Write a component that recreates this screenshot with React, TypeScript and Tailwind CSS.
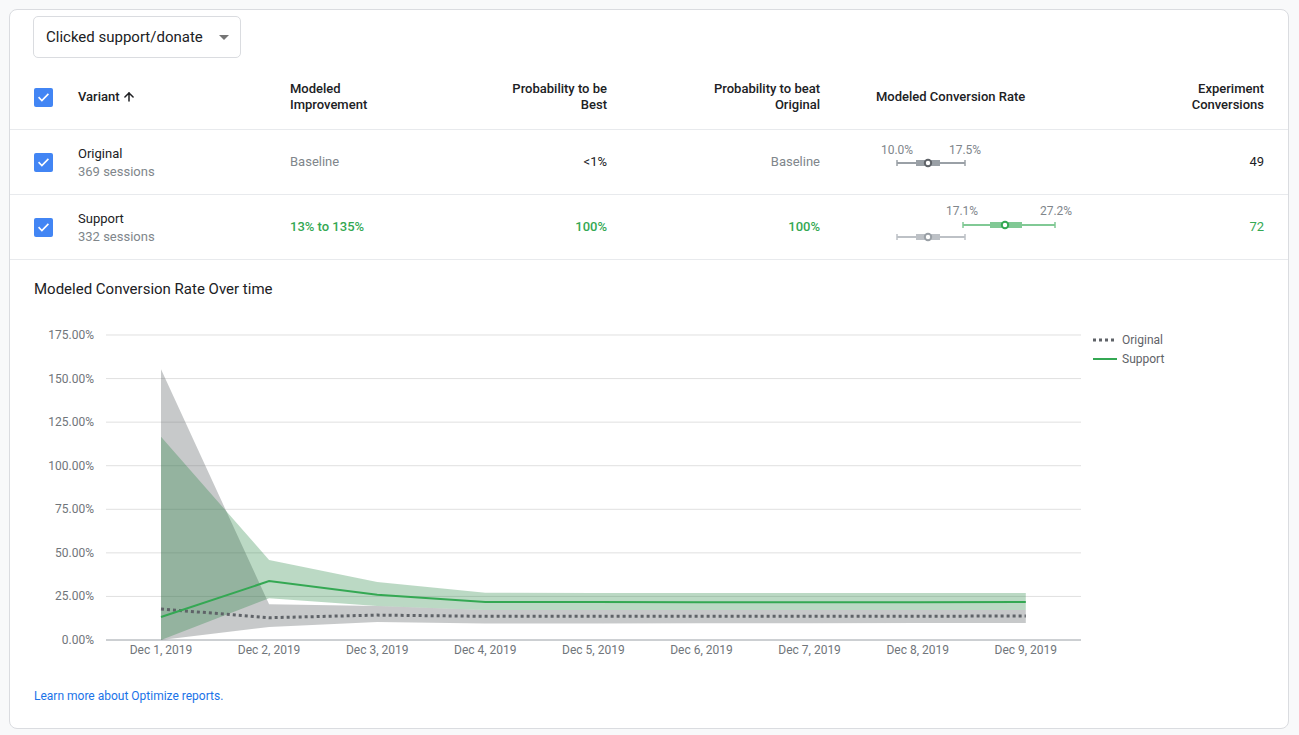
import { ArrowUp } from "lucide-react";

const font = { fontFamily: "Roboto, 'Liberation Sans', sans-serif" };

// chart geometry (svg origin at page x=34, y=311)
const X0 = 127;
const DX = 108.1;
const yv = (v: number) => 329 - v * 1.7429;
const xi = (i: number) => X0 + i * DX;

const origLine = [17.8, 12.8, 14.3, 13.6, 13.6, 13.6, 13.6, 13.6, 13.8];
const origHi = [155.4, 20.5, 19.5, 17.2, 17.2, 17.2, 17.2, 17.2, 17.2];
const origLo = [0, 7.5, 10.3, 9.5, 9.5, 9.6, 9.6, 9.7, 9.7];
const supLine = [13.2, 33.8, 26.0, 21.8, 21.8, 21.7, 21.7, 21.7, 21.8];
const supHi = [116.6, 45.9, 33.3, 27.1, 27.0, 27.0, 26.9, 26.9, 26.9];
const supLo = [0, 24.0, 19.5, 17.2, 17.2, 17.2, 17.2, 17.2, 17.2];

const days = ["Dec 1, 2019", "Dec 2, 2019", "Dec 3, 2019", "Dec 4, 2019", "Dec 5, 2019", "Dec 6, 2019", "Dec 7, 2019", "Dec 8, 2019", "Dec 9, 2019"];
const ticks = [0, 25, 50, 75, 100, 125, 150, 175];

function line(vals: number[]) {
    return vals.map((v, i) => `${i === 0 ? "M" : "L"}${xi(i).toFixed(1)},${yv(v).toFixed(1)}`).join(" ");
}

function band(hi: number[], lo: number[]) {
    const top = hi.map((v, i) => `${xi(i).toFixed(1)},${yv(v).toFixed(1)}`);
    const bottom = lo.map((v, i) => `${xi(i).toFixed(1)},${yv(v).toFixed(1)}`).reverse();
    return [...top, ...bottom].join(" ");
}

function Check() {
    return (
        <div className="w-[19px] h-[19px] rounded-[2px] bg-[#4285f4] flex items-center justify-center">
            <svg width="13" height="13" viewBox="0 0 24 24" fill="none" stroke="white" strokeWidth="3" strokeLinecap="square">
                <path d="M4 12.5l5 5L20 6.5" />
            </svg>
        </div>
    );
}

function RangeOriginal() {
    return (
        <svg width="220" height="64" className="block">
            <text x="21" y="24" textAnchor="middle" fontSize="12" fill="#80868b" style={font}>10.0%</text>
            <text x="89" y="24" textAnchor="middle" fontSize="12" fill="#80868b" style={font}>17.5%</text>
            <line x1="21" y1="33" x2="89" y2="33" stroke="#9aa0a6" strokeWidth="2" />
            <line x1="21" y1="30" x2="21" y2="36" stroke="#9aa0a6" strokeWidth="1.5" />
            <line x1="89" y1="30" x2="89" y2="36" stroke="#9aa0a6" strokeWidth="1.5" />
            <rect x="40" y="30" width="24" height="6" fill="#9aa0a6" />
            <circle cx="52" cy="33" r="3.2" fill="white" stroke="#5f6368" strokeWidth="2" />
        </svg>
    );
}

function RangeSupport() {
    return (
        <svg width="220" height="64" className="block">
            <text x="86" y="20" textAnchor="middle" fontSize="12" fill="#80868b" style={font}>17.1%</text>
            <text x="180" y="20" textAnchor="middle" fontSize="12" fill="#80868b" style={font}>27.2%</text>
            <line x1="87" y1="30" x2="179" y2="30" stroke="#81c995" strokeWidth="2" />
            <line x1="87" y1="27" x2="87" y2="33" stroke="#81c995" strokeWidth="1.5" />
            <line x1="179" y1="27" x2="179" y2="33" stroke="#81c995" strokeWidth="1.5" />
            <rect x="114" y="27" width="32" height="6" fill="#81c995" />
            <circle cx="129" cy="30" r="3.2" fill="white" stroke="#34a853" strokeWidth="2" />
            <line x1="21" y1="42" x2="89" y2="42" stroke="#bdc1c6" strokeWidth="2" />
            <line x1="21" y1="39" x2="21" y2="45" stroke="#bdc1c6" strokeWidth="1.5" />
            <line x1="89" y1="39" x2="89" y2="45" stroke="#bdc1c6" strokeWidth="1.5" />
            <rect x="40" y="39" width="24" height="6" fill="#bdc1c6" />
            <circle cx="52" cy="42" r="3.2" fill="white" stroke="#9aa0a6" strokeWidth="2" />
        </svg>
    );
}

function Chart() {
    return (
        <svg width="1230" height="355" className="block">
            {ticks.map((t) => (
                <g key={t}>
                    <line x1="72" x2="1047" y1={yv(t)} y2={yv(t)} stroke={t === 0 ? "#9aa0a6" : "#e0e0e0"} strokeWidth="1" />
                    <text x="60" y={yv(t) + 4} textAnchor="end" fontSize="12" fill="#70757a" style={font}>{t.toFixed(2)}%</text>
                </g>
            ))}
            {days.map((d, i) => (
                <text key={d} x={xi(i)} y="343" textAnchor="middle" fontSize="12" fill="#70757a" style={font}>{d}</text>
            ))}
            <polygon points={band(origHi, origLo)} fill="rgba(95,99,104,0.35)" />
            <polygon points={band(supHi, supLo)} fill="rgba(30,130,60,0.3)" />
            <path d={line(origLine)} fill="none" stroke="#5f6368" strokeWidth="3" strokeDasharray="3 3" />
            <path d={line(supLine)} fill="none" stroke="#34a853" strokeWidth="2" />
            <line x1="1059" x2="1083" y1="29" y2="29" stroke="#5f6368" strokeWidth="3" strokeDasharray="3 3" />
            <text x="1088" y="33" fontSize="12" fill="#5f6368" style={font}>Original</text>
            <line x1="1059" x2="1083" y1="48" y2="48" stroke="#34a853" strokeWidth="2" />
            <text x="1088" y="52" fontSize="12" fill="#5f6368" style={font}>Support</text>
        </svg>
    );
}

export default function App() {
    return (
        <div className="min-h-screen bg-[#f8f9fa] pl-[9px] pr-[10px] pt-[9px] pb-[8px] text-[#202124]" style={font}>
            <div className="bg-white border border-[#dadce0] rounded-lg pt-[6px] pb-[24px]">
                {/* Metric selector */}
                <div className="pl-[23px]">
                    <button type="button" className="w-[208px] h-[42px] border border-[#dadce0] rounded-[5px] flex items-center justify-between pl-[12px] pr-[11px] text-[15px] text-[#202124]">
                        <span>Clicked support/donate</span>
                        <span className="w-0 h-0 border-l-[5px] border-r-[5px] border-t-[5px] border-l-transparent border-r-transparent border-t-[#757575]" />
                    </button>
                </div>

                {/* Results table */}
                <div className="mt-[12px] text-[13px]">
                    <div className="grid grid-cols-[44px_212px_170px_147px_213px_1fr_124px] items-center h-[60px] pb-[5px] px-[24px] border-b border-[#e8eaed] font-medium leading-4">
                        <Check />
                        <div className="flex items-center gap-[2px]">Variant <ArrowUp size={14} strokeWidth={2.6} /></div>
                        <div>Modeled<br />Improvement</div>
                        <div className="text-right">Probability to be<br />Best</div>
                        <div className="text-right">Probability to beat<br />Original</div>
                        <div className="pl-[56px]">Modeled Conversion Rate</div>
                        <div className="text-right">Experiment<br />Conversions</div>
                    </div>

                    <div className="grid grid-cols-[44px_212px_170px_147px_213px_1fr_124px] items-center h-[65px] px-[24px] border-b border-[#e8eaed]">
                        <Check />
                        <div className="leading-[18px] pt-[1px]">
                            <div>Original</div>
                            <div className="text-[#80868b]">369 sessions</div>
                        </div>
                        <div className="text-[#80868b]">Baseline</div>
                        <div className="text-right">&lt;1%</div>
                        <div className="text-right text-[#80868b]">Baseline</div>
                        <div className="pl-[56px] self-stretch"><RangeOriginal /></div>
                        <div className="text-right">49</div>
                    </div>

                    <div className="grid grid-cols-[44px_212px_170px_147px_213px_1fr_124px] items-center h-[65px] px-[24px] border-b border-[#e8eaed]">
                        <Check />
                        <div className="leading-[18px] pt-[1px]">
                            <div>Support</div>
                            <div className="text-[#80868b]">332 sessions</div>
                        </div>
                        <div className="text-[#34a853] font-medium">13% to 135%</div>
                        <div className="text-right text-[#34a853] font-medium">100%</div>
                        <div className="text-right text-[#34a853] font-medium">100%</div>
                        <div className="pl-[56px] self-stretch"><RangeSupport /></div>
                        <div className="text-right text-[#34a853]">72</div>
                    </div>
                </div>

                {/* Over time chart */}
                <div className="px-[24px] pt-[19px]">
                    <h2 className="text-[15px] leading-5 text-[#202124]">Modeled Conversion Rate Over time</h2>
                    <div className="mt-[12px]">
                        <Chart />
                    </div>
                    <a href="#" className="block mt-[22px] text-[12px] leading-4 text-[#1a73e8]">Learn more about Optimize reports.</a>
                </div>
            </div>
        </div>
    );
}
